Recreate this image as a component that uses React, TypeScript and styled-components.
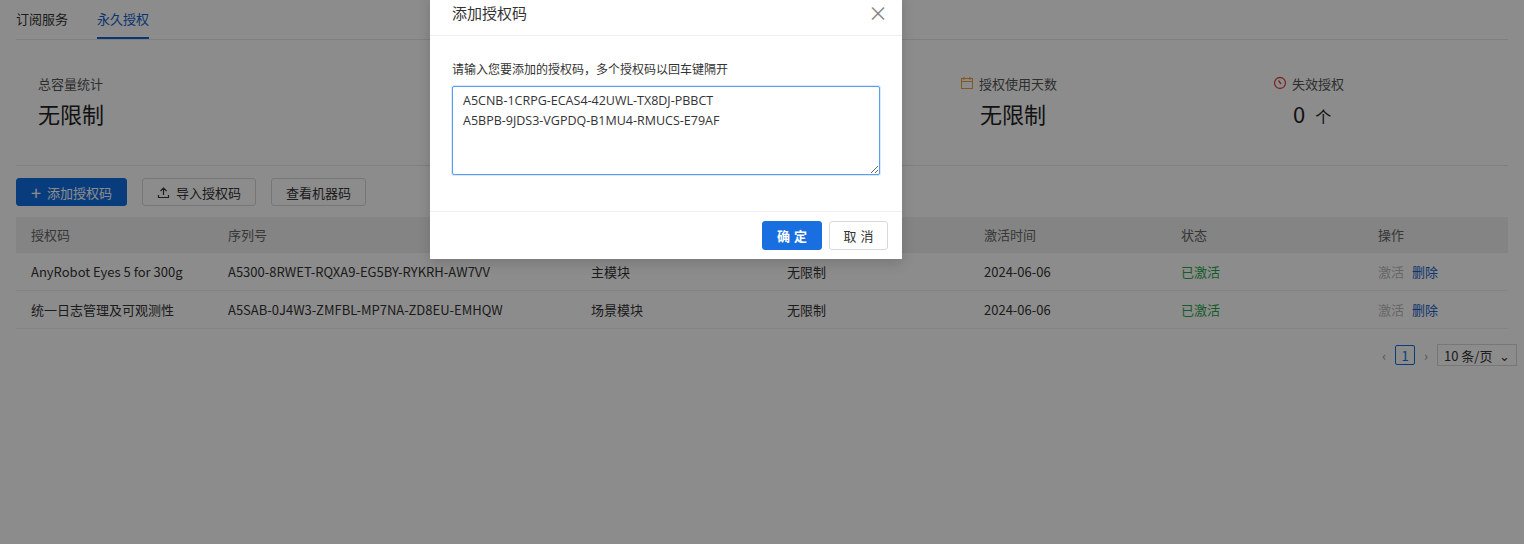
import React from "react";
import styled, { createGlobalStyle } from "styled-components";

const G = createGlobalStyle`
  body { margin: 0; font-family: "Noto Sans CJK SC", "Noto Sans", sans-serif; background: #fff; color: rgba(0,0,0,0.85); }
`;
const Page = styled.div`width:1524px;height:544px;padding:0 16px;box-sizing:border-box;position:relative;overflow:hidden;font-size:13px;`;
const Tabs = styled.div`display:flex;gap:29px;border-bottom:1px solid #e8e8e8;height:39px;`;
const Tab = styled.div<{ $active?: boolean }>`
  line-height:37px;font-size:13px;color:${p => p.$active ? "#1561c9" : "#333"};
  border-bottom:2px solid ${p => p.$active ? "#1561c9" : "transparent"};
`;
const Stats = styled.div`display:grid;grid-template-columns:609px 313px 313px 1fr;padding:33px 22px 0;height:126px;box-sizing:border-box;border-bottom:1px solid #e8e8e8;`;
const Stat = styled.div<{ $indent?: number }>`display:flex;flex-direction:column;gap:4px;
  & > div:last-child{padding-left:${p => p.$indent || 0}px;}`;
const Label = styled.div`font-size:13px;color:#555;display:flex;align-items:center;gap:5px;height:20px;`;
const Value = styled.div`font-size:22px;color:#222;display:flex;align-items:baseline;gap:10px;`;
const Small = styled.span`font-size:16px;`;
const Actions = styled.div`display:flex;gap:15px;padding:12px 0 11px;`;
const Btn = styled.button<{ $primary?: boolean }>`
  height:28px;padding:0 14px;font-size:13px;font-family:inherit;border-radius:3px;display:flex;align-items:center;gap:6px;
  border:1px solid ${p => p.$primary ? "#126ee3" : "#d9d9d9"};background:${p => p.$primary ? "#126ee3" : "#fff"};color:${p => p.$primary ? "#fff" : "#333"};
`;
const Table = styled.div`display:flex;flex-direction:column;`;
const Row = styled.div<{ $head?: boolean }>`display:grid;grid-template-columns:197px 363px 196px 197px 197px 197px 1fr;height:${p => p.$head ? 36 : 38}px;box-sizing:border-box;align-items:center;
  background:${p => p.$head ? "#f0f0f0" : "#fff"};border-bottom:1px solid #eee;color:${p => p.$head ? "#666" : "#333"};
  & > div{padding-left:15px;}`;
const Cell = styled.div<{ $c?: string }>`color:${p => p.$c || "inherit"};white-space:nowrap;`;
const Link = styled.span<{ $c: string }>`color:${p => p.$c};margin-right:8px;`;
const Pager = styled.div`display:flex;justify-content:flex-end;align-items:center;gap:9px;padding-top:15px;color:#999;font-size:13px;`;
const PageNum = styled.div`width:20px;height:20px;border:1px solid #126ee3;color:#126ee3;display:flex;align-items:center;justify-content:center;border-radius:2px;box-sizing:border-box;`;
const Select = styled.div`width:80px;height:22px;border:1px solid #d9d9d9;display:flex;justify-content:space-between;align-items:center;padding:0 6px;box-sizing:border-box;color:#333;margin-right:-9px;`;
const Mask = styled.div`position:absolute;inset:0;background:rgba(0,0,0,0.45);`;
const Modal = styled.div`position:absolute;left:430px;top:-6px;width:472px;background:#fff;box-shadow:0 4px 12px rgba(0,0,0,0.15);`;
const MHead = styled.div`height:42px;display:flex;justify-content:space-between;align-items:flex-end;padding:0 17px 12px 22px;box-sizing:border-box;border-bottom:1px solid #eee;font-size:15px;color:#333;`;
const Close = styled.span`font-size:20px;color:#888;line-height:20px;width:14px;display:flex;justify-content:center;`;
const MBody = styled.div`padding:24px 22px 36px;display:flex;flex-direction:column;gap:9px;font-size:12px;color:#333;`;
const Area = styled.textarea`width:428px;height:89px;box-sizing:border-box;border:1px solid #5b9cf0;border-radius:2px;padding:4px 10px;resize:vertical;font-family:"Open Sans","Noto Sans",sans-serif;font-size:12.5px;line-height:20px;color:#333;outline:none;box-shadow:0 0 0 1px rgba(18,110,227,0.15);`;
const MFoot = styled.div`border-top:1px solid #eee;display:flex;justify-content:flex-end;gap:7px;padding:9px 14px 9px;`;
const MBtn = styled.button<{ $primary?: boolean }>`width:${p => p.$primary ? 60 : 59}px;height:29px;border-radius:3px;font-family:inherit;font-size:13px;letter-spacing:4px;text-indent:4px;
  border:1px solid ${p => p.$primary ? "#1a6fe0" : "#d9d9d9"};background:${p => p.$primary ? "#1a6fe0" : "#fff"};color:${p => p.$primary ? "#fff" : "#333"};font-weight:${p => p.$primary ? 700 : 400};`;

const rows = [
  ["AnyRobot Eyes 5 for 300g", "A5300-8RWET-RQXA9-EG5BY-RYKRH-AW7VV", "主模块"],
  ["统一日志管理及可观测性", "A5SAB-0J4W3-ZMFBL-MP7NA-ZD8EU-EMHQW", "场景模块"],
];

export default function App() {
  return (
    <Page>
      <G />
      <Tabs><Tab>订阅服务</Tab><Tab $active>永久授权</Tab></Tabs>
      <Stats>
        <Stat><Label>总容量统计</Label><Value>无限制</Value></Stat>
        <Stat />
        <Stat $indent={20}>
          <Label>
            <svg width="14" height="14" viewBox="0 0 14 14"><rect x="1.5" y="2.5" width="11" height="10" fill="none" stroke="#e8a33d" /><line x1="1.5" y1="5.5" x2="12.5" y2="5.5" stroke="#e8a33d" /><line x1="4" y1="1" x2="4" y2="4" stroke="#e8a33d" /><line x1="10" y1="1" x2="10" y2="4" stroke="#e8a33d" /></svg>
            授权使用天数</Label>
          <Value>无限制</Value>
        </Stat>
        <Stat $indent={20}>
          <Label>
            <svg width="14" height="14" viewBox="0 0 14 14"><circle cx="7" cy="7" r="5.5" fill="none" stroke="#e04545" strokeWidth="1.3" /><path d="M5.5 4.5 L8 8" stroke="#e04545" strokeWidth="1.3" /></svg>
            失效授权</Label>
          <Value>0<Small>个</Small></Value>
        </Stat>
      </Stats>
      <Actions>
        <Btn $primary><span style={{ fontSize: 18, lineHeight: 1 }}>+</span>添加授权码</Btn>
        <Btn><svg width="13" height="13" viewBox="0 0 13 13"><path d="M6.5 9V2 M3.5 5 L6.5 2 L9.5 5 M1.5 9 V11.5 H11.5 V9" fill="none" stroke="#333" strokeWidth="1.2" /></svg>导入授权码</Btn>
        <Btn>查看机器码</Btn>
      </Actions>
      <Table>
        <Row $head>{["授权码", "序列号", "", "", "激活时间", "状态", "操作"].map((h, i) => <Cell key={i}>{h}</Cell>)}</Row>
        {rows.map(r => (
          <Row key={r[0]}>
            <Cell>{r[0]}</Cell><Cell>{r[1]}</Cell><Cell>{r[2]}</Cell><Cell>无限制</Cell><Cell>2024-06-06</Cell>
            <Cell $c="#2aa84a">已激活</Cell>
            <Cell><Link $c="#bbb">激活</Link><Link $c="#1a5fc9">删除</Link></Cell>
          </Row>
        ))}
      </Table>
      <Pager><span>‹</span><PageNum>1</PageNum><span>›</span><Select><span>10 条/页</span><span>⌄</span></Select></Pager>
      <Mask />
      <Modal>
        <MHead><span>添加授权码</span><Close>×</Close></MHead>
        <MBody>
          <div>请输入您要添加的授权码，多个授权码以回车键隔开</div>
          <Area defaultValue={"A5CNB-1CRPG-ECAS4-42UWL-TX8DJ-PBBCT\nA5BPB-9JDS3-VGPDQ-B1MU4-RMUCS-E79AF"} />
        </MBody>
        <MFoot><MBtn $primary>确定</MBtn><MBtn>取消</MBtn></MFoot>
      </Modal>
    </Page>
  );
}
